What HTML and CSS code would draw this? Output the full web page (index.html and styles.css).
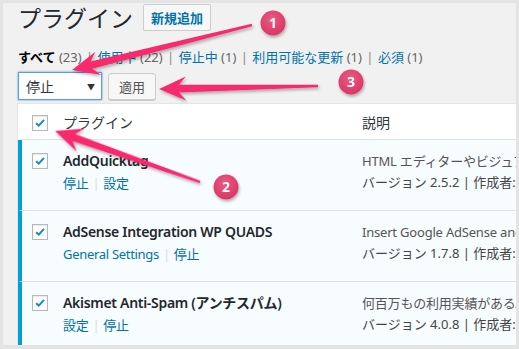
FILE: index.html
```html
<!DOCTYPE html>
<html>
    <head>
        <title>プラグイン</title>
        <link rel="stylesheet" href="styles.css">
    </head>
    <body>
        <div class="frame">
          <div class="wrap">
            <div class="hd">
              <h1>プラグイン</h1>
              <span class="add-new">新規追加</span>
            </div>

            <div class="subsub">
              <span class="current">すべて</span> <span class="count">(23)</span>
              <span class="sep">|</span>
              <a>使用中</a> <span class="count">(22)</span>
              <span class="sep">|</span>
              <a>停止中</a> <span class="count">(1)</span>
              <span class="sep">|</span>
              <a>利用可能な更新</a> <span class="count">(1)</span>
              <span class="sep">|</span>
              <a>必須</a> <span class="count">(1)</span>
            </div>

            <div class="bulk">
              <div class="select">停止<span class="caret">▼</span></div>
              <span class="btn">適用</span>
            </div>

            <div class="plugins">
              <div class="row row-head">
                <div class="c-check"><span class="cb"><svg viewBox="0 0 16 16"><path d="M3.5 8.2 L6.6 11 L12.6 4.4"/></svg></span></div>
                <div class="c-name">プラグイン</div>
                <div class="c-desc">説明</div>
              </div>

              <div class="row active">
                <div class="c-check"><span class="cb"><svg viewBox="0 0 16 16"><path d="M3.5 8.2 L6.6 11 L12.6 4.4"/></svg></span></div>
                <div class="c-name">
                  <div class="title">AddQuicktag</div>
                  <div class="actions"><a>停止</a><span class="sep">|</span><a>設定</a></div>
                </div>
                <div class="c-desc">
                  <div class="text">HTML エディターやビジュアルエディターにクイックタグを追加します。</div>
                  <div class="meta">バージョン 2.5.2 | 作成者: Frank Bültge</div>
                </div>
              </div>

              <div class="row active">
                <div class="c-check"><span class="cb"><svg viewBox="0 0 16 16"><path d="M3.5 8.2 L6.6 11 L12.6 4.4"/></svg></span></div>
                <div class="c-name">
                  <div class="title">AdSense Integration WP QUADS</div>
                  <div class="actions"><a>General Settings</a><span class="sep">|</span><a>停止</a></div>
                </div>
                <div class="c-desc">
                  <div class="text">Insert Google AdSense and other ads fully automatic</div>
                  <div class="meta">バージョン 1.7.8 | 作成者: Rene Hermenau</div>
                </div>
              </div>

              <div class="row active">
                <div class="c-check"><span class="cb"><svg viewBox="0 0 16 16"><path d="M3.5 8.2 L6.6 11 L12.6 4.4"/></svg></span></div>
                <div class="c-name">
                  <div class="title">Akismet Anti-Spam (アンチスパム)</div>
                  <div class="actions"><a>設定</a><span class="sep">|</span><a>停止</a></div>
                </div>
                <div class="c-desc">
                  <div class="text">何百万もの利用実績があるAkismet はあなたのブログをスパムから守ります。</div>
                  <div class="meta">バージョン 4.0.8 | 作成者: Automattic</div>
                </div>
              </div>
            </div>
          </div>
        </div>

        <!-- annotation layer -->
        <svg class="marks" width="519" height="349" viewBox="0 0 519 349">
          <defs>
            <filter id="sh" x="-20%" y="-50%" width="140%" height="200%">
              <feDropShadow dx="1" dy="2" stdDeviation="1.6" flood-color="#000" flood-opacity="0.3"/>
            </filter>
            <radialGradient id="bg" cx="45%" cy="35%" r="65%">
              <stop offset="0" stop-color="#ea5b84"/>
              <stop offset="1" stop-color="#d93564"/>
            </radialGradient>
          </defs>
          <g class="arrow" filter="url(#sh)">
            <polygon transform="translate(252 25) rotate(165.96)" points="0,-1.2 165.5,-3.8 158.5,-12 185.5,0 158.5,12 165.5,3.8 0,1.2"/>
            <polygon transform="translate(200 182) rotate(-160.6)" points="0,-1.2 133.7,-3.8 126.7,-12 153.7,0 126.7,12 133.7,3.8 0,1.2"/>
            <polygon transform="translate(318 86) rotate(178.9)" points="0,-1.2 139,-3.8 132,-12 159,0 132,12 139,3.8 0,1.2"/>
          </g>
          <g class="badge" filter="url(#sh)">
            <circle cx="273" cy="23" r="12.5"/>
            <circle cx="351" cy="82" r="12.5"/>
            <circle cx="226" cy="187" r="12.5"/>
          </g>
          <g class="num">
            <text x="273" y="28">1</text>
            <text x="351" y="87">3</text>
            <text x="226" y="192">2</text>
          </g>
        </svg>
    </body>
</html>
```

FILE: styles.css
```css
html, body
{
    margin: 0;
    padding: 0;
}

body
{
    width: 519px;
    height: 349px;
    overflow: hidden;
    position: relative;
    background-color: #e4e4e4;
    font-family: "Noto Sans", "Noto Sans CJK JP", sans-serif;
    font-size: 13px;
    color: #444;
}

.frame
{
    padding: 3px 3px 4px 3px;
}

.wrap
{
    height: 342px;
    padding: 1px 0 0 15px;
    box-sizing: border-box;
    background-color: #f1f1f1;
    overflow: hidden;
}

a
{
    color: #0073aa;
}

/* title */
.hd
{
    display: flex;
    align-items: center;
    height: 27px;
}

h1
{
    margin: 0;
    font-family: "Noto Sans CJK JP", sans-serif;
    font-size: 23px;
    font-weight: 400;
    line-height: 27px;
    color: #23282d;
}

.add-new
{
    margin-left: 10px;
    height: 27px;
    padding: 0 7px;
    box-sizing: border-box;
    display: flex;
    align-items: center;
    border: 1px solid #ccc;
    border-radius: 2px;
    background-color: #f7f7f7;
    color: #0073aa;
    font-family: "Noto Sans CJK JP", sans-serif;
    font-weight: 700;
    font-size: 13px;
}

/* filter links */
.subsub
{
    margin-top: 16px;
    line-height: 20px;
    white-space: nowrap;
    font-size: 13px;
}

.subsub .current
{
    color: #000;
    font-weight: 700;
}

.subsub .count
{
    color: #666;
}

.subsub .sep
{
    color: #888;
    margin: 0 1px;
}

/* bulk actions */
.bulk
{
    display: flex;
    align-items: center;
    margin-top: 5px;
    height: 28px;
}

.select
{
    width: 84px;
    height: 28px;
    box-sizing: border-box;
    border: 1px solid #5b9dd9;
    box-shadow: 0 0 2px rgba(30, 140, 190, .8);
    background-color: #fff;
    display: flex;
    align-items: center;
    justify-content: space-between;
    padding: 0 6px 0 7px;
    font-size: 14px;
    color: #32373c;
}

.caret
{
    font-size: 8px;
    color: #333;
}

.btn
{
    margin-left: 6px;
    width: 48px;
    height: 27px;
    box-sizing: border-box;
    border: 1px solid #ccc;
    border-radius: 3px;
    background-color: #f7f7f7;
    box-shadow: 0 1px 0 #ccc;
    display: flex;
    align-items: center;
    justify-content: center;
    color: #555;
    font-size: 13px;
}

/* plugin table */
.plugins
{
    margin: 3px 0 0 -1px;
    width: 560px;
    border: 1px solid #e5e5e5;
    background-color: #fff;
}

.row
{
    display: grid;
    grid-template-columns: 41px 299px 1fr;
    border-left: 4px solid transparent;
    border-bottom: 1px solid #e1e1e1;
    white-space: nowrap;
    overflow: hidden;
}

.row-head
{
    height: 35px;
    align-items: center;
    font-size: 14px;
    color: #32373c;
}

.row-head .c-check
{
    padding-top: 0;
}

.row-head .cb
{
    margin-top: 2px;
}

.row.active
{
    height: 70px;
    background-color: #f7fcfe;
    border-left-color: #00a0d2;
}

.c-check
{
    padding: 13px 0 0 10px;
}

.cb
{
    display: block;
    width: 16px;
    height: 16px;
    box-sizing: border-box;
    border: 1px solid #b4b9be;
    background-color: #fff;
    box-shadow: inset 0 1px 2px rgba(0, 0, 0, .1);
}

.cb svg
{
    display: block;
    width: 14px;
    height: 14px;
    fill: none;
    stroke: #1e8cbe;
    stroke-width: 2.4;
}

.row.active .c-name, .row.active .c-desc
{
    padding-top: 11px;
}

.title
{
    line-height: 20px;
    font-size: 14px;
    font-weight: 600;
    letter-spacing: -0.3px;
    color: #23282d;
}

.actions
{
    margin-top: 2px;
    line-height: 20px;
    font-size: 13px;
    letter-spacing: -0.3px;
}

.actions .sep
{
    color: #ddd;
    margin: 0 4px;
}

.text
{
    line-height: 20px;
    letter-spacing: -0.2px;
    color: #555;
}

.meta
{
    margin-top: 1px;
    line-height: 20px;
    color: #444;
}

/* annotations */
.marks
{
    position: absolute;
    top: 0;
    left: 0;
    pointer-events: none;
}

.arrow polygon
{
    fill: #f7296d;
}

.badge circle
{
    fill: url(#bg);
}

.num text
{
    fill: #fff;
    font-family: "Noto Sans", sans-serif;
    font-size: 14px;
    font-weight: 700;
    text-anchor: middle;
}
```
